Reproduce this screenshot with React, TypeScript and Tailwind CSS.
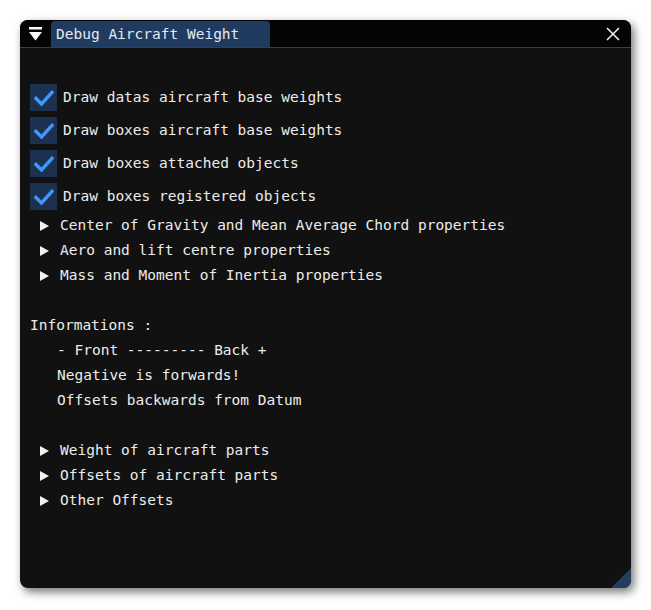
import React from 'react';

const font = { fontFamily: '"DejaVu Sans Mono", "Liberation Mono", monospace' };

const Checkbox = ({ label }: { label: string }) => (
    <div className="flex items-center h-[27px] gap-[6px]">
        <div className="w-[27px] h-[27px] bg-[#1c3150] flex items-center justify-center">
            <svg width="20" height="16" viewBox="0 0 20 16">
                <path d="M2 8.5 L7.5 14 L18 2.5" fill="none" stroke="#4296fa" strokeWidth="3.4" strokeLinecap="square" />
            </svg>
        </div>
        <span>{label}</span>
    </div>
);

const TreeNode = ({ label }: { label: string }) => (
    <div className="flex items-center h-[25px] pl-[10px]">
        <svg width="9" height="10" viewBox="0 0 9 10" className="mr-[11px]">
            <path d="M0 0 L9 5 L0 10 Z" fill="#f2f2f2" />
        </svg>
        <span>{label}</span>
    </div>
);

const Line = ({ text, indent }: { text: string, indent?: boolean }) => (
    <div className={`flex items-center h-[25px] ${indent ? 'pl-[27px]' : ''}`}>
        <span className="whitespace-pre">{text}</span>
    </div>
);

export default function App() {
    return (
        <div className="w-[651px] h-[610px] bg-white pt-[20px] pl-[20px]" style={font}>
            <div className="relative w-[611px] h-[568px] rounded-[8px] bg-[#111111] overflow-hidden shadow-[3px_4px_10px_rgba(0,0,0,0.55)] text-[14.5px] text-[#ececec]">
                {/* title bar */}
                <div className="flex items-end h-[28px] bg-[#050505] border-b border-[#2b405c]">
                    <div className="w-[31px] h-full flex items-center justify-center">
                        <svg width="13" height="14" viewBox="0 0 13 14">
                            <rect x="0" y="0" width="13" height="2.5" fill="#fafafa" />
                            <path d="M0 5 L13 5 L6.5 13.5 Z" fill="#fafafa" />
                        </svg>
                    </div>
                    <div className="w-[219px] h-[26px] bg-[#1f3b60] rounded-t-[4px] flex items-center pl-[5px] pt-[2px] text-[#e4eaf2]">
                        Debug Aircraft Weight
                    </div>
                    <div className="flex-1" />
                    <div className="w-[30px] h-full flex items-center justify-center mr-[3px]">
                        <svg width="14" height="14" viewBox="0 0 14 14">
                            <path d="M1 1 L13 13 M13 1 L1 13" stroke="#f5f5f5" strokeWidth="1.5" />
                        </svg>
                    </div>
                </div>

                {/* body */}
                <div className="flex flex-col pl-[10px] pt-[36px]">
                    <div className="flex flex-col gap-[6px]">
                        <Checkbox label="Draw datas aircraft base weights" />
                        <Checkbox label="Draw boxes aircraft base weights" />
                        <Checkbox label="Draw boxes attached objects" />
                        <Checkbox label="Draw boxes registered objects" />
                    </div>
                    <div className="flex flex-col mt-[3px]">
                        <TreeNode label="Center of Gravity and Mean Average Chord properties" />
                        <TreeNode label="Aero and lift centre properties" />
                        <TreeNode label="Mass and Moment of Inertia properties" />
                        <div className="h-[25px]" />
                        <Line text="Informations :" />
                        <Line text="- Front --------- Back +" indent />
                        <Line text="Negative is forwards!" indent />
                        <Line text="Offsets backwards from Datum" indent />
                        <div className="h-[25px]" />
                        <TreeNode label="Weight of aircraft parts" />
                        <TreeNode label="Offsets of aircraft parts" />
                        <TreeNode label="Other Offsets" />
                    </div>
                </div>

                {/* resize grip */}
                <svg width="20" height="20" viewBox="0 0 20 20" className="absolute right-0 bottom-0">
                    <path d="M20 0 L20 20 L0 20 Z" fill="#223e63" />
                </svg>
            </div>
        </div>
    );
}
